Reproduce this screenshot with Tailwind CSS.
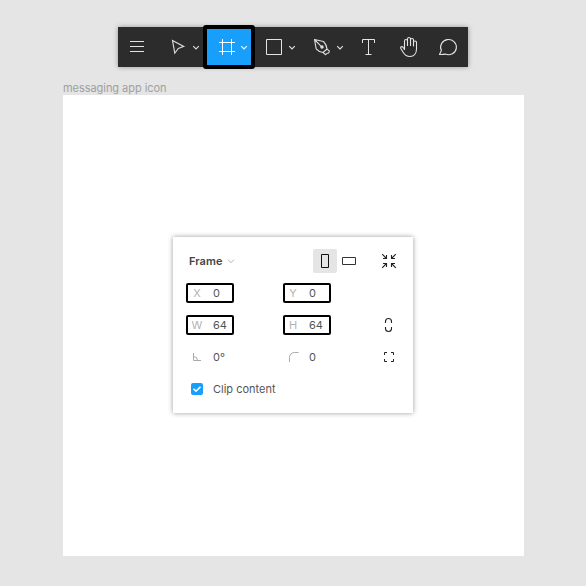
<!DOCTYPE html>
<html lang="en">
<head>
<meta charset="utf-8">
<title>Frame properties</title>
<script src="https://cdn.jsdelivr.net/npm/@tailwindcss/browser@4"></script>
</head>
<body class="relative h-[586px] w-[586px] overflow-hidden bg-[#e5e5e5] font-['Inter',sans-serif] text-[11px] text-[#555]">
  <header class="mx-auto mt-[27px] ml-[118px] flex h-10 w-[350px] items-center bg-[#2c2c2c] shadow-[0_0_5px_rgba(0,0,0,0.35)]">
    <svg class="h-10 w-[38px] shrink-0" viewBox="118 27 38 40" fill="none" stroke="#e4e4e4"><path d="M130 41.5h14M130 46.5h14M130 51.5h14"/></svg>
    <svg class="h-10 w-[47px] shrink-0" viewBox="156 27 47 40" fill="none" stroke="#dedede" stroke-width="1.1"><path d="M172.500 40.500L183.700 46.500L178.300 48.400L174.800 53.200Z"/><path d="M193.200 46.200l2.800 2.800l2.800-2.800"/></svg>
    <div class="flex h-11 w-[52px] shrink-0 items-center rounded-[3px] border-4 border-black bg-[#189ffb]">
      <svg class="h-9 w-11" viewBox="207 29 44 36" fill="none" stroke="#fff"><path d="M219 42.500h16M219 51.500h16M222.500 39v16M231.500 39v16"/><path d="M241.200 46.200l2.800 2.800l2.800-2.800" stroke-width="1.1"/></svg>
    </div>
    <svg class="h-10 w-12 shrink-0" viewBox="255 27 48 40" fill="none" stroke="#e4e4e4"><path d="M266.500 39.500h15v15h-15Z"/><path d="M289.200 46.200l2.800 2.800l2.800-2.800" stroke-width="1.1"/></svg>
    <svg class="h-10 w-12 shrink-0" viewBox="303 27 48 40" fill="none" stroke="#dedede" stroke-width="1.1" stroke-linejoin="round"><path d="M314.500 39.500L323.500 41.500Q326.500 44.500 327 49L323 52.500Q318.300 51.600 316.200 48.900ZM314.500 39.500L321.400 46.600M327 49L329.400 51.100L328.600 53L327.300 53.200L325.700 54.700L323 52.500"/><circle cx="322" cy="47.100" r="1.200" fill="#dedede"/><path d="M337.200 46.200l2.800 2.800l2.800-2.800"/></svg>
    <svg class="h-10 w-[35px] shrink-0" viewBox="351 27 35 40" fill="none" stroke="#e4e4e4"><path d="M362.500 43v-3.500h12V43M368.500 39.500v15M365.500 54.500h6"/></svg>
    <svg class="h-10 w-[45px] shrink-0" viewBox="386 27 45 40" fill="none" stroke="#e4e4e4" stroke-width="1.1" stroke-linecap="round" stroke-linejoin="round"><path d="M404.500 49.500V41a1.500 1.500 0 0 1 3 0v4.500V39a1.500 1.500 0 0 1 3 0v6.500V40a1.500 1.500 0 0 1 3 0v6V42.500a1.500 1.500 0 0 1 3 0V49c0 4.500-2.500 7.500-6.500 7.500c-3.500 0-5.300-1.500-6.700-4l-2.500-4c-.8-1.500 1.200-2.500 2.200-1.300l1.500 2.300"/></svg>
    <svg class="h-10 w-[34px] shrink-0" viewBox="431 27 34 40" fill="none" stroke="#e4e4e4" stroke-width="1.1" stroke-linejoin="round"><path d="M439.500 54.500L441.400 50.500A7.900 7.600 0 1 1 445.300 54.100Q443 54.700 439.500 54.500Z"/></svg>
  </header>

  <main class="ml-[63px] mt-[13px]">
    <h1 class="h-[15px] whitespace-nowrap text-[11px] leading-[16px] tracking-[-0.05px] text-[#a0a0a0]">messaging app icon</h1>
    <div class="h-[461px] w-[461px] bg-white pl-[110px] pt-[142px]">
      <section class="h-44 w-60 bg-white py-2 shadow-[0_0_5px_rgba(0,0,0,0.4)]">
        <div class="flex h-8 items-center pl-4">
          <div class="flex w-[124px] items-center">
            <span class="font-semibold tracking-[0.05px] text-[#444]">Frame</span>
            <svg class="ml-[5px] h-2 w-2" viewBox="0 0 8 8" fill="none" stroke="#b0b0b0"><path d="M1 2.700l3 3l3-3"/></svg>
          </div>
          <div class="flex h-6 w-6 items-center justify-center rounded-[2px] bg-[#e5e5e5]">
            <svg class="h-4 w-4" viewBox="0 0 16 16" fill="none" stroke="#111"><path d="M4.500 1.500h7v13h-7Z"/></svg>
          </div>
          <div class="flex h-6 w-6 items-center justify-center">
            <svg class="h-4 w-4" viewBox="0 0 16 16" fill="none" stroke="#333"><path d="M1.500 4.500h13v7h-13Z"/></svg>
          </div>
          <svg class="ml-5 h-4 w-4" viewBox="0 0 16 16" fill="none" stroke="#222" stroke-width="1.1"><path d="M1.200 1.200l4.300 4.300M2 5.500h3.500V2M14.800 1.200l-4.300 4.300M14 5.500h-3.500V2M1.200 14.800l4.300-4.300M2 10.500h3.500V14M14.800 14.800l-4.300-4.300M14 10.500h-3.500V14"/></svg>
        </div>
        <div class="flex h-8 items-center pl-[13px]">
          <div class="mr-[49px] flex h-5 w-12 items-center rounded-[2px] border-2 border-black"><span class="w-[18px] text-center text-[#b3b3b3]">X</span><span class="ml-[7px]">0</span></div>
          <div class="flex h-5 w-12 items-center rounded-[2px] border-2 border-black"><span class="w-4 text-center text-[#b3b3b3]">Y</span><span class="ml-2">0</span></div>
        </div>
        <div class="flex h-8 items-center pl-[13px]">
          <div class="mr-[49px] flex h-5 w-12 items-center rounded-[2px] border-2 border-black"><span class="w-[18px] text-center text-[#b3b3b3]">W</span><span class="ml-[7px]">64</span></div>
          <div class="flex h-5 w-12 items-center rounded-[2px] border-2 border-black"><span class="w-4 text-center text-[#b3b3b3]">H</span><span class="ml-2">64</span></div>
          <svg class="ml-[50px] h-4 w-4" viewBox="0 0 16 16" fill="none" stroke="#222" stroke-width="1.1"><path d="M4.500 6V4.500a3 3 0 0 1 6 0V6M4.500 10v1.500a3 3 0 0 0 6 0V10"/></svg>
        </div>
        <div class="flex h-8 items-center pl-4">
          <svg class="h-4 w-4" viewBox="0 0 16 16" fill="none" stroke="#aaa"><path d="M4.500 4v7.500H12M4.500 7.500a4 4 0 0 1 4 4"/></svg>
          <span class="ml-2 w-[73px]">0°</span>
          <svg class="h-4 w-4" viewBox="0 0 16 16" fill="none" stroke="#aaa"><path d="M3.500 13V8.500a5 5 0 0 1 5-5h4"/></svg>
          <span class="ml-[7px] w-[72px]">0</span>
          <svg class="h-4 w-4" viewBox="0 0 16 16" fill="none" stroke="#222"><path d="M3.500 6V3.500H6M10 3.500h2.500V6M3.500 10v2.500H6M10 12.500h2.500V10"/></svg>
        </div>
        <div class="flex h-8 items-center pl-[18px]">
          <svg class="h-3 w-3 rounded-[2px] bg-[#189ffb]" viewBox="0 0 12 12" fill="none" stroke="#fff" stroke-width="1.600"><path d="M2.500 5.700l2.500 2.500l4.500-4.500"/></svg>
          <span class="ml-2.5">Clip content</span>
        </div>
      </section>
    </div>
  </main>
</body>
</html>
